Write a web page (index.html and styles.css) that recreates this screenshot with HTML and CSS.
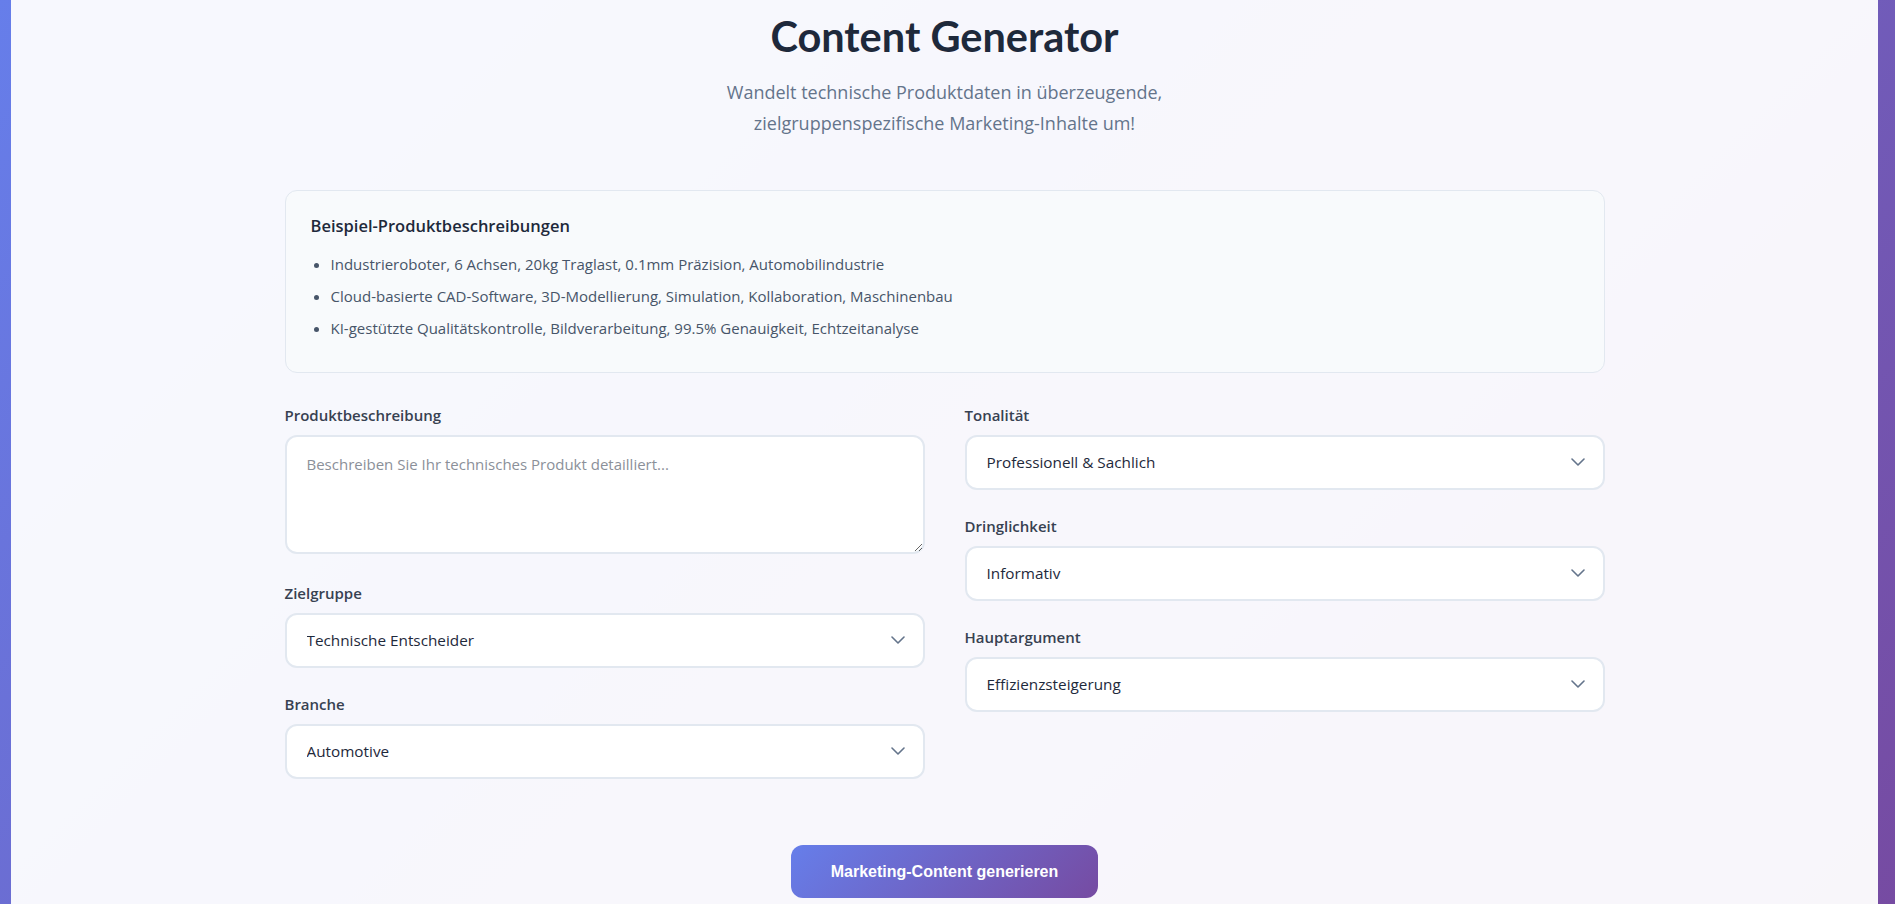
FILE: index.html
```html
<!DOCTYPE html>
<html lang="de">
<head>
<meta charset="utf-8">
<title>Content Generator</title>
<link rel="stylesheet" href="styles.css">
</head>
<body>
<main class="container">
  <div class="inner">
    <header class="header">
      <h1 class="title">Content Generator</h1>
      <p class="subtitle">Wandelt technische Produktdaten in überzeugende, zielgruppenspezifische Marketing-Inhalte um!</p>
    </header>

    <section class="examples">
      <h3 class="examples-title">Beispiel-Produktbeschreibungen</h3>
      <ul class="examples-list">
        <li>Industrieroboter, 6 Achsen, 20kg Traglast, 0.1mm Präzision, Automobilindustrie</li>
        <li>Cloud-basierte CAD-Software, 3D-Modellierung, Simulation, Kollaboration, Maschinenbau</li>
        <li>KI-gestützte Qualitätskontrolle, Bildverarbeitung, 99.5% Genauigkeit, Echtzeitanalyse</li>
      </ul>
    </section>

    <form class="form">
      <div class="form-grid">
        <div class="column">
          <div class="field field-text">
            <label class="label" for="desc">Produktbeschreibung</label>
            <textarea id="desc" class="textarea" placeholder="Beschreiben Sie Ihr technisches Produkt detailliert..."></textarea>
          </div>
          <div class="field">
            <label class="label" for="target">Zielgruppe</label>
            <div class="select-wrap">
              <select id="target" class="select"><option>Technische Entscheider</option></select>
              <svg class="chevron" viewBox="0 0 14 8" width="14" height="8"><path d="M1 1l6 6 6-6" fill="none" stroke="currentColor" stroke-width="1.6" stroke-linecap="round" stroke-linejoin="round"/></svg>
            </div>
          </div>
          <div class="field">
            <label class="label" for="branch">Branche</label>
            <div class="select-wrap">
              <select id="branch" class="select"><option>Automotive</option></select>
              <svg class="chevron" viewBox="0 0 14 8" width="14" height="8"><path d="M1 1l6 6 6-6" fill="none" stroke="currentColor" stroke-width="1.6" stroke-linecap="round" stroke-linejoin="round"/></svg>
            </div>
          </div>
        </div>
        <div class="column">
          <div class="field">
            <label class="label" for="tone">Tonalität</label>
            <div class="select-wrap">
              <select id="tone" class="select"><option>Professionell &amp; Sachlich</option></select>
              <svg class="chevron" viewBox="0 0 14 8" width="14" height="8"><path d="M1 1l6 6 6-6" fill="none" stroke="currentColor" stroke-width="1.6" stroke-linecap="round" stroke-linejoin="round"/></svg>
            </div>
          </div>
          <div class="field">
            <label class="label" for="urgency">Dringlichkeit</label>
            <div class="select-wrap">
              <select id="urgency" class="select"><option>Informativ</option></select>
              <svg class="chevron" viewBox="0 0 14 8" width="14" height="8"><path d="M1 1l6 6 6-6" fill="none" stroke="currentColor" stroke-width="1.6" stroke-linecap="round" stroke-linejoin="round"/></svg>
            </div>
          </div>
          <div class="field">
            <label class="label" for="arg">Hauptargument</label>
            <div class="select-wrap">
              <select id="arg" class="select"><option>Effizienzsteigerung</option></select>
              <svg class="chevron" viewBox="0 0 14 8" width="14" height="8"><path d="M1 1l6 6 6-6" fill="none" stroke="currentColor" stroke-width="1.6" stroke-linecap="round" stroke-linejoin="round"/></svg>
            </div>
          </div>
        </div>
      </div>
      <div class="actions">
        <button type="button" class="btn">Marketing-Content generieren</button>
      </div>
    </form>
  </div>
</main>
</body>
</html>
```
FILE: styles.css
```css
html, body {
  height: 100%;
}
body {
  margin: 0;
  padding: 0 17px 0 11px;
  background: linear-gradient(135deg, #667eea 0%, #764ba2 100%);
  font-family: "Open Sans", "Noto Sans", sans-serif;
  color: #1e293b;
  overflow: hidden;
}
.container {
  min-height: 100%;
  background: rgba(255, 255, 255, 0.95);
  padding: 12px 0 40px;
}
.inner {
  max-width: 1320px;
  margin: 0 auto;
}
.header {
  text-align: center;
}
.title {
  margin: 0 0 15px;
  font-family: Lato, "Open Sans", sans-serif;
  font-weight: 700;
  font-size: 41.5px;
  line-height: 1.2;
  color: #1e293b;
}
.subtitle {
  margin: 0 auto;
  max-width: 600px;
  font-size: 18px;
  line-height: 31.5px;
  color: #64748b;
}
.examples {
  margin-top: 50px;
  background: #f8fafc;
  border: 1px solid #e2e8f0;
  border-radius: 12px;
  padding: 24px 24px 24px 25px;
}
.examples-title {
  margin: 0 0 15px;
  font-size: 16.5px;
  font-weight: 600;
  line-height: 22px;
  color: #1e293b;
}
.examples-list {
  margin: 0;
  padding-left: 20px;
  font-size: 15px;
  line-height: 24px;
  color: #475569;
}
.examples-list li {
  margin-bottom: 8px;
}
.form {
  margin-top: 32px;
}
.form-grid {
  display: grid;
  grid-template-columns: 1fr 1fr;
  column-gap: 40px;
}
.field {
  margin-bottom: 26px;
}
.field-text {
  margin-bottom: 29px;
}
.label {
  display: block;
  margin-bottom: 10px;
  font-size: 15px;
  font-weight: 600;
  line-height: 20px;
  color: #374151;
}
.textarea {
  display: block;
  box-sizing: border-box;
  width: 100%;
  height: 119px;
  padding: 16px 20px;
  border: 2px solid #e2e8f0;
  border-radius: 12px;
  background: #fff;
  font-family: "Open Sans", "Noto Sans", sans-serif;
  font-size: 15px;
  line-height: 22px;
  color: #1e293b;
  resize: vertical;
}
.textarea::placeholder {
  color: #8b9099;
}
.select-wrap {
  position: relative;
}
.select {
  display: block;
  box-sizing: border-box;
  width: 100%;
  height: 55px;
  padding: 0 48px 0 20px;
  border: 2px solid #e2e8f0;
  border-radius: 12px;
  background: #fff;
  font-family: "Open Sans", "Noto Sans", sans-serif;
  font-size: 15.3px;
  color: #1e293b;
  appearance: none;
  -webkit-appearance: none;
}
.chevron {
  position: absolute;
  right: 20px;
  top: 50%;
  margin-top: -4px;
  color: #64748b;
  pointer-events: none;
}
.actions {
  display: flex;
  justify-content: center;
  margin-top: 40px;
}
.btn {
  padding: 18px 40px;
  border: none;
  border-radius: 12px;
  background: linear-gradient(135deg, #667eea 0%, #764ba2 100%);
  color: #fff;
  font-family: "Liberation Sans", Arial, sans-serif;
  font-size: 16px;
  font-weight: 700;
  line-height: 17px;
  cursor: pointer;
}
```
